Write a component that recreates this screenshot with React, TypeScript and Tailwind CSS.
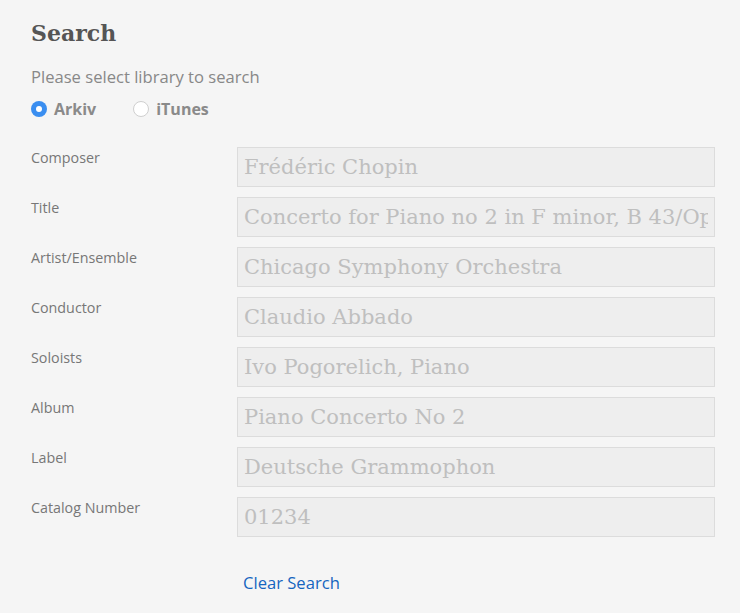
import { useState } from 'react';

const fields: { label: string; placeholder: string }[] = [
  { label: 'Composer', placeholder: 'Frédéric Chopin' },
  { label: 'Title', placeholder: 'Concerto for Piano no 2 in F minor, B 43/Op 21' },
  { label: 'Artist/Ensemble', placeholder: 'Chicago Symphony Orchestra' },
  { label: 'Conductor', placeholder: 'Claudio Abbado' },
  { label: 'Soloists', placeholder: 'Ivo Pogorelich, Piano' },
  { label: 'Album', placeholder: 'Piano Concerto No 2' },
  { label: 'Label', placeholder: 'Deutsche Grammophon' },
  { label: 'Catalog Number', placeholder: '01234' },
];

function Radio({ checked, label, onSelect }: { checked: boolean; label: string; onSelect: () => void }) {
  return (
    <button type="button" onClick={onSelect} className="flex items-center gap-[7px]">
      <span
        className={
          checked
            ? 'flex h-4 w-4 items-center justify-center rounded-full bg-[#3a8ef0]'
            : 'flex h-4 w-4 items-center justify-center rounded-full border border-[#cfcfcf] bg-white'
        }
      >
        {checked && <span className="h-[6px] w-[6px] rounded-full bg-white" />}
      </span>
      <span className="text-[16px] font-bold leading-5 text-[#8a8a8a]">{label}</span>
    </button>
  );
}

export default function App() {
  const [library, setLibrary] = useState('arkiv');

  return (
    <div className="min-h-[613px] bg-[#f5f5f5] px-[31px] pt-[19px] font-['Open_Sans',sans-serif]">
      <h2 className="font-['DejaVu_Serif',serif] text-[22px] font-bold leading-7 text-[#555]">Search</h2>

      <p className="mt-[18px] text-[16.6px] leading-6 text-[#888]">Please select library to search</p>
      <div className="mt-[10px] flex items-center gap-[37px]">
        <Radio checked={library === 'arkiv'} label="Arkiv" onSelect={() => setLibrary('arkiv')} />
        <Radio checked={library === 'itunes'} label="iTunes" onSelect={() => setLibrary('itunes')} />
      </div>

      <div className="mt-[28px] flex flex-col gap-[10px]">
        {fields.map((field) => (
          <div key={field.label} className="grid grid-cols-[206px_478px] items-start">
            <label className="pt-[1px] text-[14.3px] leading-5 text-[#777]">{field.label}</label>
            <input
              readOnly
              placeholder={field.placeholder}
              className="h-10 w-full border border-[#dcdcdc] bg-[#eeeeee] px-[6px] font-['DejaVu_Serif',serif] text-[21px] text-[#555] outline-none placeholder:text-[#bfbfbf]"
            />
          </div>
        ))}
      </div>

      <div className="grid grid-cols-[206px_478px] pt-[34px]">
        <span />
        <a href="#" className="pl-[6px] text-[16.6px] leading-6 text-[#1565c0]">
          Clear Search
        </a>
      </div>
    </div>
  );
}
